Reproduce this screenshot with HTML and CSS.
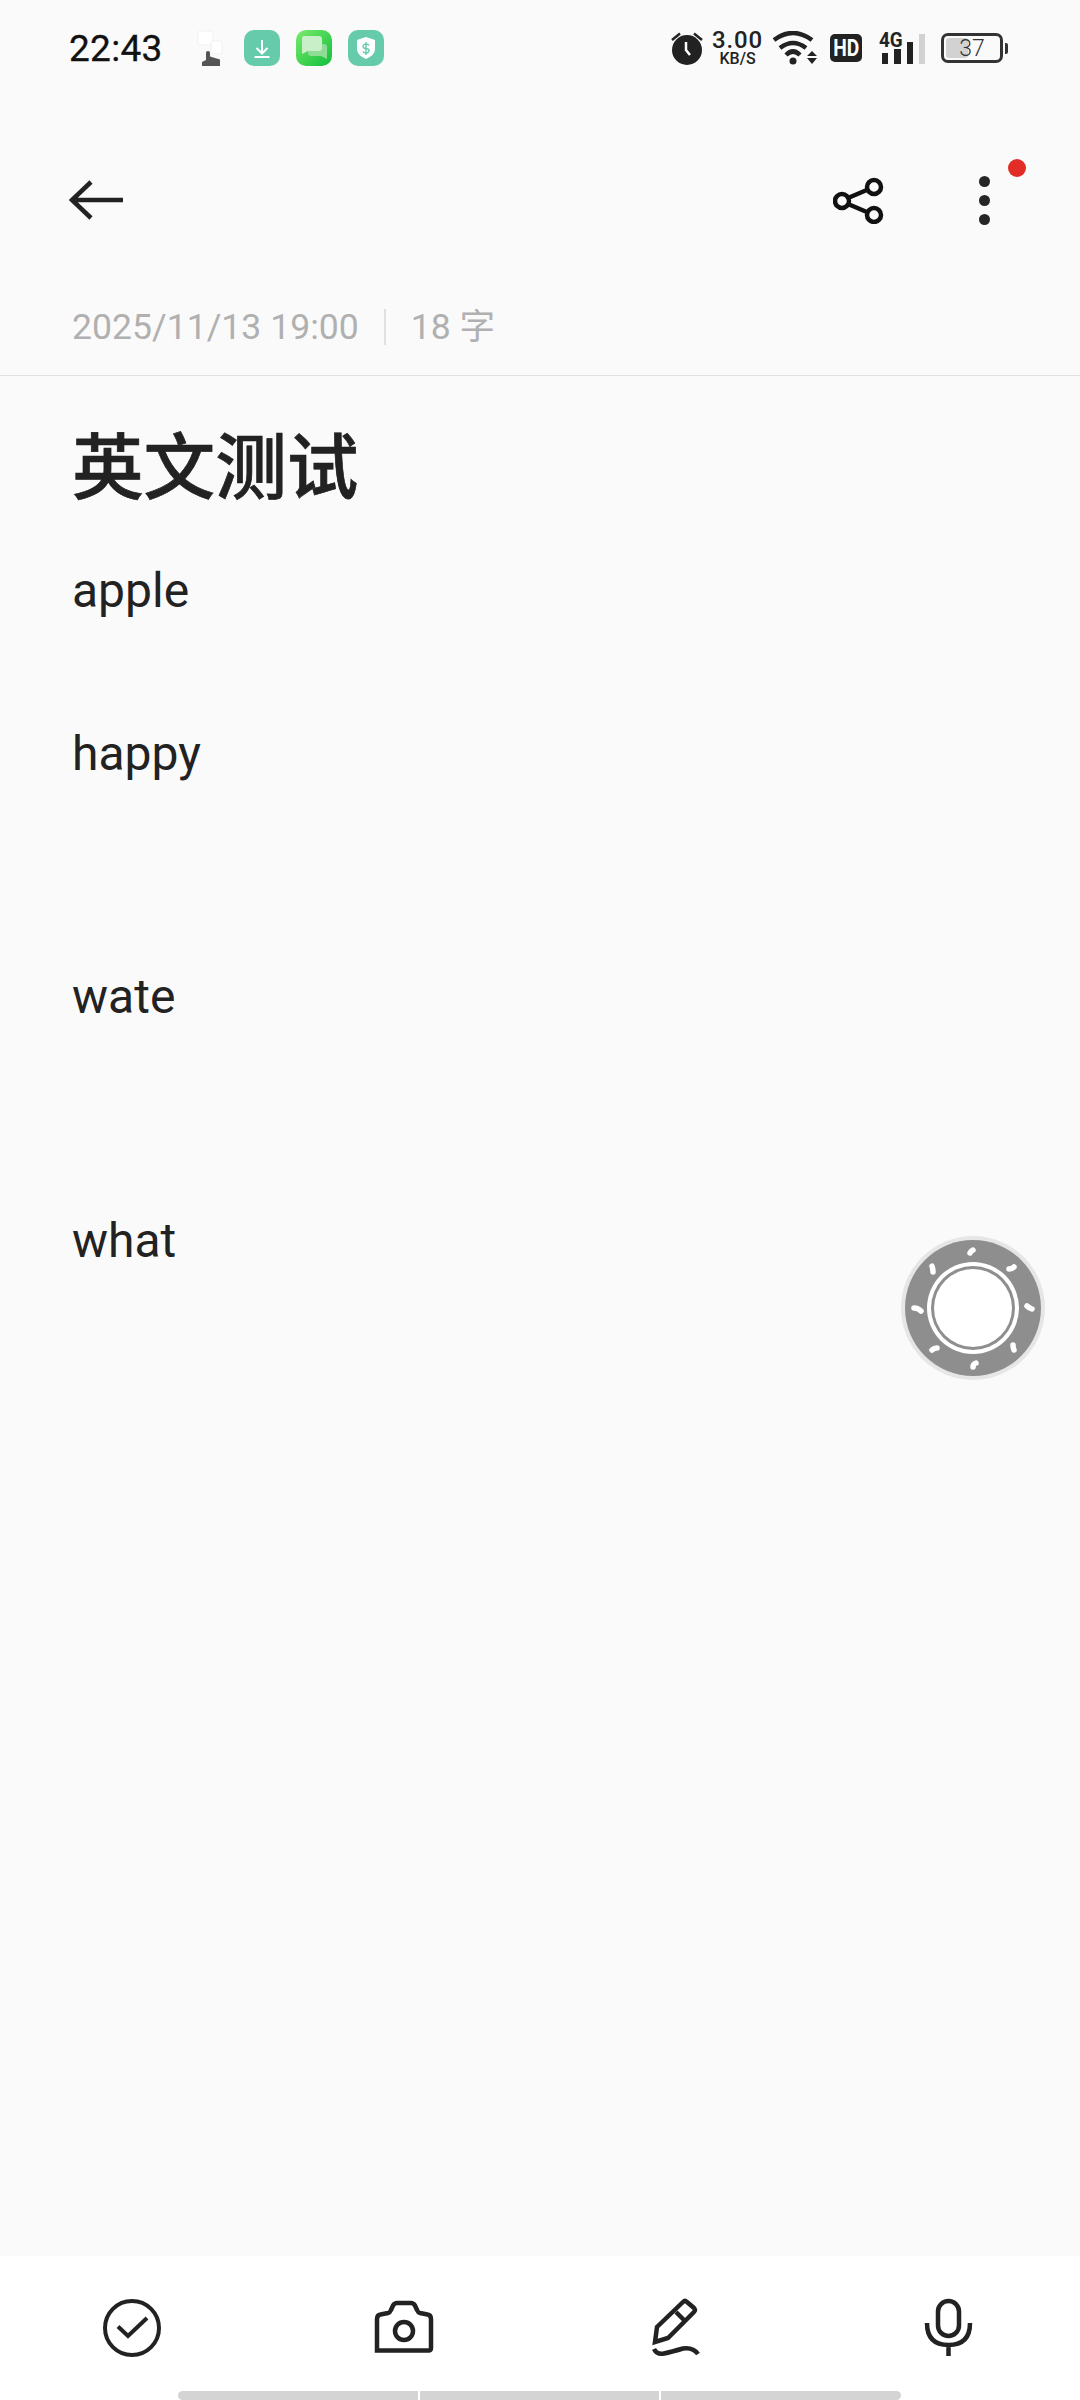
FILE: index.html
```html
<!DOCTYPE html>
<html>
<head>
    <meta charset="utf-8">
    <title>英文测试</title>
    <link rel="stylesheet" href="styles.css">
</head>
<body>
    <div class="status">
        <span class="time">22:43</span>
        <div class="notifs">
            <svg class="nicon hand" viewBox="0 0 31 36">
                <rect x="1" y="1" width="15" height="14" rx="3" fill="#fff" stroke="#f1f1f1" stroke-width="1"/>
                <rect x="14" y="11" width="11" height="13" rx="2" fill="#fff" stroke="#f1f1f1" stroke-width="1"/>
                <path d="M5 36V32L9 30V22.500Q9 21 11 21T13 22.500V26.500L23 29.500V36Z" fill="#555"/>
            </svg>
            <svg class="nicon" viewBox="0 0 36 36">
                <rect width="36" height="36" rx="10" fill="#66cbab"/>
                <path d="M18 10V23M12.500 18L18 23.500L23.500 18M10.500 27H25.500" fill="none" stroke="#fff" stroke-width="2"/>
            </svg>
            <svg class="nicon" viewBox="0 0 36 36">
                <defs>
                    <linearGradient id="msg" x1="0" y1="0" x2="1" y2="1">
                        <stop offset="0" stop-color="#7bea6c"/>
                        <stop offset="1" stop-color="#10bf3c"/>
                    </linearGradient>
                </defs>
                <rect width="36" height="36" rx="10" fill="url(#msg)"/>
                <path d="M13 14H28Q31 14 31 17V29L25 26H15Q12 26 12 23V15Z" fill="#8fdc97"/>
                <path d="M8 6H23Q26 6 26 9V18Q26 21 23 21H12L6 24V8Q6 6 8 6Z" fill="#c9efc9"/>
            </svg>
            <svg class="nicon" viewBox="0 0 36 36">
                <rect width="36" height="36" rx="10" fill="#66cbab"/>
                <path d="M18 7L27 10V19Q27 25 18 29Q9 25 9 19V10Z" fill="#fff"/>
                <path d="M21 15.500Q20.500 14 18 14T15 16T18 18.500T21 21T18 23T15 21.500M18 12V25" fill="none" stroke="#66cbab" stroke-width="1.400"/>
            </svg>
        </div>
        <div class="sys">
            <svg class="alarm" viewBox="0 0 32 34">
                <circle cx="16" cy="19" r="15" fill="#222"/>
                <path d="M1 9L9 2.500M31 9L23 2.500" stroke="#222" stroke-width="2.500" fill="none"/>
                <path d="M15 11V19L19 24" stroke="#fff" stroke-width="2.500" fill="none"/>
            </svg>
            <div class="speed"><span class="num">3.00</span><span class="unit">KB/S</span></div>
            <svg class="wifi" viewBox="0 0 44 34">
                <path d="M1 9Q20 -5 39 9M7 17Q20 7 33 17M13 24Q20 17 27 24" fill="none" stroke="#222" stroke-width="4.500"/>
                <circle cx="20" cy="30" r="3.500" fill="#222"/>
                <path d="M34 25L39 20L44 25ZM34 27H44L39 33Z" fill="#222"/>
            </svg>
            <div class="hd"><span>HD</span></div>
            <div class="signal">
                <span class="fourg">4G</span>
                <svg class="bars" viewBox="0 0 46 31">
                    <rect x="3" y="20" width="6" height="11" fill="#222"/>
                    <rect x="15" y="16" width="7" height="15" fill="#222"/>
                    <rect x="28" y="9" width="6" height="22" fill="#222"/>
                    <rect x="40" y="1" width="6" height="30" fill="#d2d2d2"/>
                </svg>
            </div>
            <div class="battery">
                <div class="shell"><div class="fill"></div><span class="level">37</span></div>
                <div class="cap"></div>
            </div>
        </div>
    </div>

    <div class="toolbar">
        <svg class="back" viewBox="0 0 54 42">
            <path d="M22 3L3 21L22 39M3 21H54" fill="none" stroke="#222" stroke-width="4.500"/>
        </svg>
        <svg class="share" viewBox="0 0 52 48">
            <circle cx="9" cy="25" r="7" fill="none" stroke="#111" stroke-width="4.500"/>
            <circle cx="41" cy="11" r="7" fill="none" stroke="#111" stroke-width="4.500"/>
            <circle cx="41" cy="39" r="7" fill="none" stroke="#111" stroke-width="4.500"/>
            <path d="M15 22L35 13.500M15 28L35 36.500" fill="none" stroke="#111" stroke-width="4.500"/>
        </svg>
        <div class="more">
            <i></i><i></i><i></i>
            <b class="dot"></b>
        </div>
    </div>

    <div class="meta">
        <span>2025/11/13 19:00</span>
        <span class="sep"></span>
        <span>18 字</span>
    </div>

    <div class="note">
        <h1>英文测试</h1>
        <p>apple<br><br>happy<br><br><br>wate<br><br><br>what</p>

        <svg class="float" viewBox="0 0 144 144">
            <circle cx="72" cy="72" r="72" fill="#e6e6e6"/>
            <circle cx="72" cy="72" r="68" fill="#8e8e8e"/>
            <circle cx="72" cy="72" r="46" fill="#fff"/>
            <circle cx="72" cy="72" r="42" fill="#8e8e8e"/>
            <circle cx="72" cy="72" r="39" fill="#fff"/>
            <g fill="none" stroke="#fff" stroke-width="5.500" stroke-linecap="round">
                <path d="M69 17Q70 15 72 14"/>
                <path d="M31 30Q32 33 32 36"/>
                <path d="M108 33Q111 33 113 31"/>
                <path d="M13 72Q17 72 20 75"/>
                <path d="M126 70Q128 72 131 73"/>
                <path d="M31 114Q33 112 36 112"/>
                <path d="M112 109Q112 112 113 114"/>
                <path d="M72 131Q72 128 75 127"/>
            </g>
        </svg>
    </div>

    <div class="bottom">
        <div class="tools">
            <svg class="tool" viewBox="0 0 60 60">
                <circle cx="30" cy="30" r="27" fill="none" stroke="#222" stroke-width="4"/>
                <path d="M16 28.500L26 38L45 20" fill="none" stroke="#222" stroke-width="4"/>
            </svg>
            <svg class="tool" viewBox="0 0 60 60">
                <path d="M3 52.500V21Q3 17 6.500 16.500L14 15Q16 14.500 17 12L19 7.500Q20.500 5 23 5H37Q39.500 5 41 7.500L43 12Q44 14.500 46 15L53.500 16.500Q57 17 57 21V50Q57 52.500 54.500 52.500Z" fill="none" stroke="#222" stroke-width="4.500"/>
                <circle cx="30" cy="33" r="9" fill="none" stroke="#222" stroke-width="4.500"/>
            </svg>
            <svg class="tool" viewBox="0 0 60 60">
                <path d="M9 44L11 29L37 4Q39 2 41 4L48 10Q50 12 48 14L22 40Z" fill="none" stroke="#222" stroke-width="4.500"/>
                <path d="M30 14L40 24" fill="none" stroke="#222" stroke-width="4.500"/>
                <path d="M8 51Q11 57 18 55.500T37 50.500Q47 49 52 56" fill="none" stroke="#222" stroke-width="4.500"/>
            </svg>
            <svg class="tool" viewBox="0 0 60 60">
                <rect x="20" y="3" width="21" height="35" rx="10.500" fill="none" stroke="#222" stroke-width="4.500"/>
                <path d="M9 25Q9 47 30.500 47T52 25M30.500 47V58" fill="none" stroke="#222" stroke-width="4.500"/>
            </svg>
        </div>
        <div class="navbar"><i></i><i></i><i></i></div>
    </div>
</body>
</html>
```

FILE: styles.css
```css
* {box-sizing:border-box;}
html, body {margin:0;padding:0;}
body {width:1080px;height:2400px;display:flex;flex-direction:column;background:#fafafa;color:#222;font-family:"Roboto","Noto Sans CJK SC",sans-serif;overflow:hidden;}

.status {height:96px;flex:none;display:flex;align-items:center;padding:0 72px 0 69px;}
.time {font-size:37px;color:#111;width:128px;letter-spacing:.3px;-webkit-text-stroke:.3px #111;}
.notifs {display:flex;gap:16px;}
.nicon {width:36px;height:36px;display:block;}
.hand {width:31px;}
.sys {margin-left:auto;display:flex;align-items:center;}
.alarm {width:32px;height:34px;margin-right:9px;}
.speed {display:flex;flex-direction:column;align-items:center;width:51px;color:#222;margin-right:10px;}
.speed .num {font-size:24px;line-height:21px;font-weight:500;letter-spacing:.8px;}
.speed .unit {font-size:16px;line-height:16px;font-weight:500;}
.wifi {width:44px;height:34px;margin-right:13px;}
.hd {width:32px;height:28px;background:#222;color:#fff;border-radius:5px;text-align:center;margin-right:17px;}
.hd span {display:block;font-size:24px;font-weight:700;line-height:28px;transform:scaleX(.8);}
.signal {position:relative;width:46px;height:31px;margin-right:16px;}
.bars {display:block;width:46px;height:31px;}
.fourg {position:absolute;left:0;top:-2px;font-size:21px;line-height:18px;font-weight:700;color:#222;transform:scaleX(.9);transform-origin:left;}
.battery {display:flex;align-items:center;gap:2px;}
.shell {position:relative;width:62px;height:30px;border:3px solid #333;border-radius:7px;}
.fill {position:absolute;left:2px;top:2px;bottom:2px;width:22px;background:#d2d2d2;border-radius:3px;}
.level {position:absolute;inset:0;text-align:center;font-size:23px;line-height:25px;color:#333;font-weight:300;}
.cap {width:3px;height:11px;background:#333;border-radius:0 2px 2px 0;}

.toolbar {height:208px;flex:none;display:flex;align-items:center;padding-left:69px;}
.back {width:54px;height:42px;}
.share {width:52px;height:48px;margin-left:auto;}
.more {position:relative;width:11px;display:flex;flex-direction:column;gap:8px;margin:0 90px 0 94px;}
.more i {display:block;width:11px;height:11px;border-radius:50%;background:#262626;}
.dot {position:absolute;left:29px;top:-17px;width:18px;height:18px;border-radius:50%;background:#e22d26;}

.meta {height:72px;flex:none;display:flex;align-items:center;padding:0 0 26px 72px;border-bottom:1px solid #e0e0e0;color:#b0b0b0;font-size:35.6px;line-height:44px;}
.sep {width:2px;height:36px;background:#e0e0e0;margin:0 25px;}

.note {flex:1;position:relative;padding:0 72px;}
h1 {margin:25px 0 0;font-size:71.6px;line-height:136px;height:149px;font-weight:500;color:#222;-webkit-text-stroke:.7px #222;}
p {margin:0;font-size:48px;line-height:81.3px;color:#222;}
.float {position:absolute;left:901px;top:860px;width:144px;height:144px;}

.bottom {height:144px;flex:none;background:#fff;position:relative;}
.tools {display:flex;justify-content:space-between;padding-top:42px;margin:0 102px;}
.tool {width:60px;height:60px;}
.navbar {position:absolute;left:178px;bottom:0;width:723px;height:9px;display:flex;gap:2px;}
.navbar i {flex:1;background:#d4d4d4;}
.navbar i:first-child {border-radius:5px 0 0 5px;}
.navbar i:last-child {border-radius:0 5px 5px 0;}
```
